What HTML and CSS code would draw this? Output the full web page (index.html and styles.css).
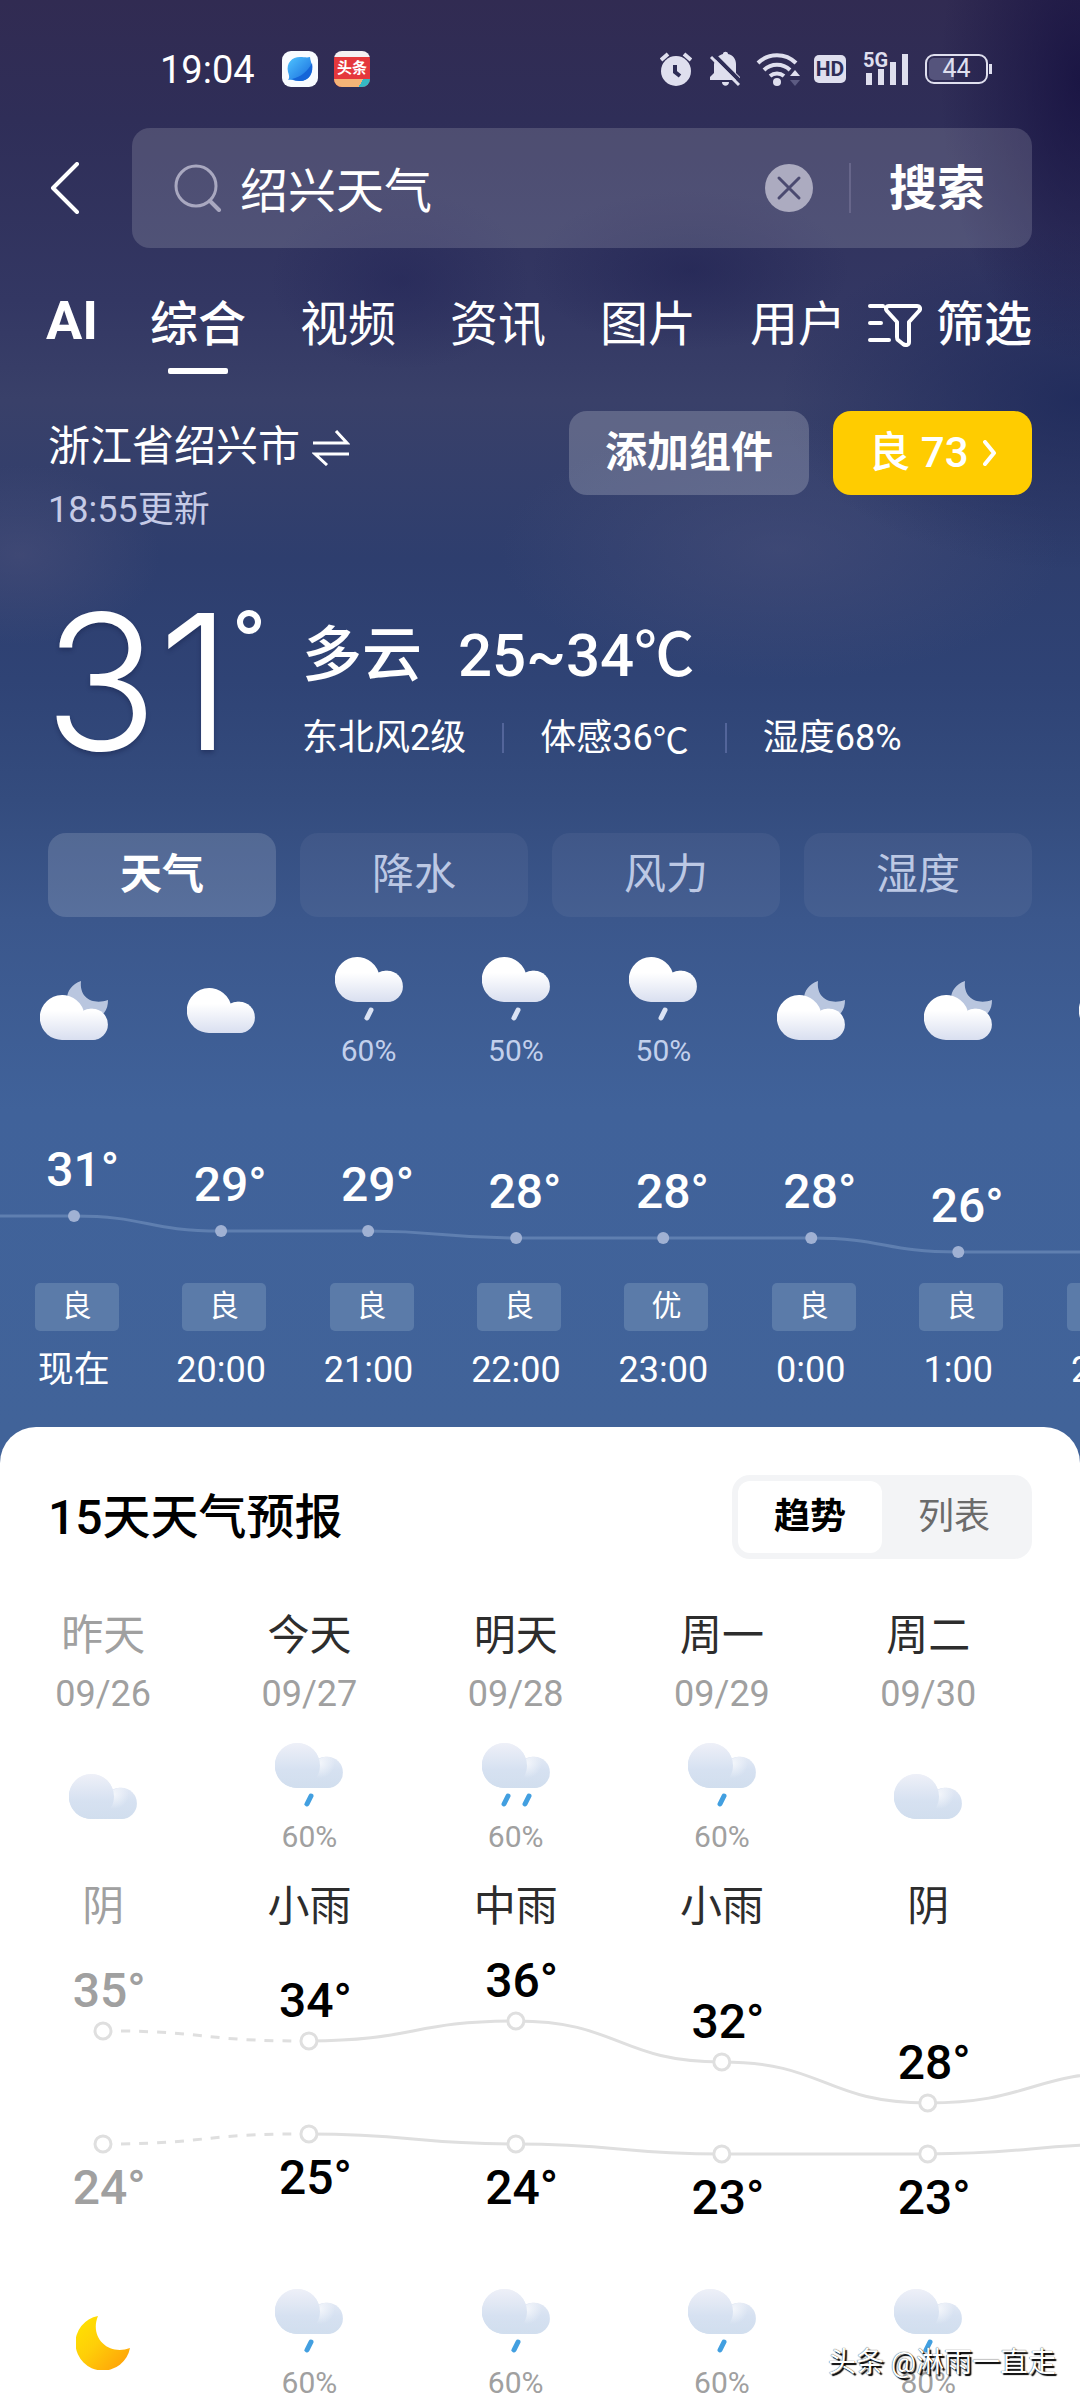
FILE: index.html
```html
<!DOCTYPE html>
<html lang="zh-CN">
<head>
<meta charset="utf-8">
<meta name="viewport" content="width=device-width, initial-scale=1">
<title>绍兴天气</title>
<link rel="stylesheet" href="styles.css">
</head>
<body>
<svg class="sprite" aria-hidden="true">
  <defs>
    <linearGradient id="g-white" gradientUnits="userSpaceOnUse" x1="0" y1="0" x2="0" y2="45"><stop offset=".35" stop-color="#fff"/><stop offset="1" stop-color="#d9dff0"/></linearGradient>
    <linearGradient id="g-pale" gradientUnits="userSpaceOnUse" x1="0" y1="0" x2="0" y2="45"><stop offset="0" stop-color="#eef0f8"/><stop offset=".6" stop-color="#d6e1f1"/><stop offset="1" stop-color="#d1deee"/></linearGradient>
    <radialGradient id="g-lobe" gradientUnits="userSpaceOnUse" cx="45" cy="20" r="15"><stop offset="0" stop-color="#f3f6fb"/><stop offset="1" stop-color="#f3f6fb" stop-opacity="0"/></radialGradient>
    <linearGradient id="g-moon" x1="0" y1="0" x2="1" y2="1"><stop offset="0" stop-color="#ffe600"/><stop offset=".45" stop-color="#ffce08"/><stop offset="1" stop-color="#ff9a0a"/></linearGradient>
    <linearGradient id="g-app" x1="0" y1="0" x2="1" y2="1"><stop offset="0" stop-color="#4fc4ff"/><stop offset="1" stop-color="#1768dc"/></linearGradient>
    <path id="cloud-shape" d="M22.500 45A22.500 22.500 0 1 1 43.600 15.400A15.700 15.700 0 1 1 52.300 45z"/>
  </defs>
  <symbol id="cloud" viewBox="0 0 68 45"><use href="#cloud-shape" fill="url(#g-white)"/><circle cx="52.300" cy="29.400" r="15.600" fill="url(#g-white)"/></symbol>
  <symbol id="cloud-moon" viewBox="0 0 68 59">
    <path d="M41 0C32 3 27 10 27 18l20 14 17 0c3-4 4-8 4-13C54 24 39 18 41 0z" fill="#b9c6df"/>
    <use href="#cloud" y="14" width="68" height="45"/>
  </symbol>
  <symbol id="cloud-rain" viewBox="0 0 68 64"><use href="#cloud" width="68" height="45"/><path d="M36 53l-4 8" stroke="#dbe3f4" stroke-width="5" stroke-linecap="round"/></symbol>
  <symbol id="pale-cloud" viewBox="0 0 68 45"><use href="#cloud-shape" fill="url(#g-pale)"/><circle cx="52.300" cy="29.400" r="15.600" fill="url(#g-pale)"/><circle cx="52.300" cy="29.400" r="15.600" fill="url(#g-lobe)"/><circle cx="22.500" cy="22.500" r="22.500" fill="url(#g-pale)"/></symbol>
  <symbol id="pale-rain" viewBox="0 0 68 64"><use href="#pale-cloud" width="68" height="45"/><path d="M36 53l-4 8" stroke="#429fe0" stroke-width="5" stroke-linecap="round"/></symbol>
  <symbol id="pale-rain-2" viewBox="0 0 68 64"><use href="#pale-cloud" width="68" height="45"/><path d="M26 53l-4 8M47 53l-4 8" stroke="#429fe0" stroke-width="5" stroke-linecap="round"/></symbol>
  <symbol id="moon" viewBox="0 0 54 54"><path d="M22 0A27.500 27.500 0 1 0 54 32C33 40 13 22 22 0z" fill="url(#g-moon)"/></symbol>
</svg>

<div class="page">
  <header class="status">
    <span class="clock">19:04</span>
    <svg class="app" viewBox="0 0 36 36" aria-hidden="true"><rect width="36" height="36" rx="9" fill="#f8fbff"/><path d="M6 29c2-2 1-5 0-8C4 12 10 6 18 6c4 0 7 1 10 0 0 3 2 6 2 11 0 8-5 13-12 13-4 0-8-2-12-1z" fill="url(#g-app)"/><path d="M10 28c9-2 16-8 20-16 2 10-3 18-12 18-4 0-6-1-8-2z" fill="#1565d8"/></svg>
    <span class="app news"><b>头条</b><i></i></span>
    <div class="system">
      <svg width="32" height="36" viewBox="0 0 32 36" aria-hidden="true"><circle cx="16" cy="20" r="15" fill="#dfdfee"/><path d="M1 9l7-6M31 9l-7-6" stroke="#dfdfee" stroke-width="4"/><path d="M15 14v7l5 4" fill="none" stroke="#2e2d56" stroke-width="4"/></svg>
      <svg class="bell" width="32" height="36" viewBox="0 0 32 36" aria-hidden="true"><path d="M1 29v-3l4-4v-9C6 7 10 4 14 3c0-3 5-3 5 0 5 1 8 5 8 10v9l4 4v3zM13 31h7c0 5-7 5-7 0z" fill="#dfdfee"/><path d="M5 4l27 27" stroke="#2e2d56" stroke-width="4"/><path d="M2 6l28 28" stroke="#dfdfee" stroke-width="3"/></svg>
      <svg class="wifi" width="46" height="36" viewBox="0 0 46 36" aria-hidden="true"><path d="M2 12a27 27 0 0 1 38 0M8 19a19 19 0 0 1 26 0M14 25a11 11 0 0 1 14 0" fill="none" stroke="#dfdfee" stroke-width="4"/><circle cx="21" cy="31" r="4" fill="#dfdfee"/><path d="M34 25l5-6 5 6z" fill="#dfdfee"/><path d="M34 29l5 6 5-6z" fill="#5c5b82"/></svg>
      <span class="hd">HD</span>
      <span class="signal"><small>5G</small><svg width="44" height="32" viewBox="0 0 44 32" aria-hidden="true"><path d="M0 20h6v12H0zM12 16h6v16h-6zM24 9h6v23h-6zM36 1h6v31h-6z" fill="#dfdfee"/></svg></span>
      <span class="battery">44</span>
    </div>
  </header>

  <form class="search-row" onsubmit="return false">
    <button class="icon-btn" type="button" aria-label="返回"><svg width="30" height="52" viewBox="0 0 30 52"><path d="M27 2L3 26l24 24" fill="none" stroke="#fff" stroke-width="4" stroke-linecap="round" stroke-linejoin="round"/></svg></button>
    <div class="search-box">
      <svg width="48" height="48" viewBox="0 0 48 48" aria-hidden="true"><circle cx="22" cy="22" r="20" fill="none" stroke="#a9a8c0" stroke-width="3"/><path d="M36 37l9 9" stroke="#a9a8c0" stroke-width="4" stroke-linecap="round"/></svg>
      <input type="text" value="绍兴天气" aria-label="搜索内容">
      <button class="icon-btn" type="button" aria-label="清除"><svg width="48" height="48" viewBox="0 0 48 48"><circle cx="24" cy="24" r="24" fill="#acabc0"/><path d="M14 14l20 20M34 14L14 34" stroke="#4b4a70" stroke-width="3" stroke-linecap="round"/></svg></button>
      <button class="submit" type="submit">搜索</button>
    </div>
  </form>

  <nav class="tabs">
    <a class="ai" href="#">AI</a>
    <a class="current" href="#">综合</a>
    <a href="#">视频</a>
    <a href="#">资讯</a>
    <a href="#">图片</a>
    <a href="#">用户</a>
    <button class="filter" type="button"><svg width="54" height="44" viewBox="0 0 54 44" aria-hidden="true"><path d="M2 3h13M2 20h11M2 37h19M21 3h28c3 0 4 3 2 5L41 19v20c0 3-3 4-6 2l-5-4c-1-1-1-2-1-3V19L19 8c-2-2-1-5 2-5z" fill="none" stroke="#fff" stroke-width="4" stroke-linecap="round" stroke-linejoin="round"/></svg>筛选</button>
  </nav>

  <section class="place">
    <div class="place-name">
      <button class="city" type="button">浙江省绍兴市<svg width="38" height="38" viewBox="0 0 38 38" aria-hidden="true"><path d="M1 15h34L24 3M37 26H3l12 11" fill="none" stroke="#fff" stroke-width="3"/></svg></button>
      <span class="updated">18:55更新</span>
    </div>
    <button class="chip" type="button">添加组件</button>
    <button class="chip air" type="button">良 73<svg width="14" height="26" viewBox="0 0 14 26" aria-hidden="true"><path d="M2 2l9 11-9 11" fill="none" stroke="#fff" stroke-width="4" stroke-linecap="round" stroke-linejoin="round"/></svg></button>
  </section>

  <section class="now">
    <div class="degrees">31</div>
    <svg class="ring" width="26" height="26" viewBox="0 0 26 26" aria-label="度"><circle cx="13" cy="13" r="9" fill="none" stroke="#fff" stroke-width="6"/></svg>
    <div class="summary">
      <div class="sky"><span>多云</span><span>25~34<span class="unit">℃</span></span></div>
      <ul class="facts"><li>东北风2级</li><li>体感36<span class="unit">℃</span></li><li>湿度68%</li></ul>
    </div>
  </section>

  <div class="metrics">
    <button class="on" type="button">天气</button>
    <button type="button">降水</button>
    <button type="button">风力</button>
    <button type="button">湿度</button>
  </div>

  <section class="hourly">
    <svg class="curve" viewBox="0 0 1179 219" aria-hidden="true">
      <path d="M0 152H74C147 152 147 167 221 167H368C442 167 442 174 516 174H811C884 174 884 188 958 188H1179" fill="none" stroke="#5f7fb0" stroke-width="3"/>
      <g fill="#a0b1d3"><circle cx="74" cy="152" r="6"/><circle cx="221" cy="167" r="6"/><circle cx="368" cy="167" r="6"/><circle cx="516" cy="174" r="6"/><circle cx="663" cy="174" r="6"/><circle cx="811" cy="174" r="6"/><circle cx="958" cy="188" r="6"/><circle cx="1105" cy="188" r="6"/></g>
    </svg>
    <ol class="hours">
      <li><div class="sign"><svg width="68" height="59"><use href="#cloud-moon"/></svg></div><div class="plot"><b style="--y:152">31°</b></div><span class="aqi">良</span><time>现在</time></li>
      <li><div class="sign"><svg width="68" height="45"><use href="#cloud"/></svg></div><div class="plot"><b style="--y:167">29°</b></div><span class="aqi">良</span><time>20:00</time></li>
      <li><div class="sign"><svg width="68" height="64"><use href="#cloud-rain"/></svg><small>60%</small></div><div class="plot"><b style="--y:167">29°</b></div><span class="aqi">良</span><time>21:00</time></li>
      <li><div class="sign"><svg width="68" height="64"><use href="#cloud-rain"/></svg><small>50%</small></div><div class="plot"><b style="--y:174">28°</b></div><span class="aqi">良</span><time>22:00</time></li>
      <li><div class="sign"><svg width="68" height="64"><use href="#cloud-rain"/></svg><small>50%</small></div><div class="plot"><b style="--y:174">28°</b></div><span class="aqi">优</span><time>23:00</time></li>
      <li><div class="sign"><svg width="68" height="59"><use href="#cloud-moon"/></svg></div><div class="plot"><b style="--y:174">28°</b></div><span class="aqi">良</span><time>0:00</time></li>
      <li><div class="sign"><svg width="68" height="59"><use href="#cloud-moon"/></svg></div><div class="plot"><b style="--y:188">26°</b></div><span class="aqi">良</span><time>1:00</time></li>
      <li><div class="sign"><svg width="54" height="45" viewBox="0 0 54 45"><use href="#cloud" width="68" height="45"/></svg></div><div class="plot"></div><span class="aqi"></span><time>2:00</time></li>
    </ol>
  </section>

  <main class="card">
    <div class="card-head">
      <h2>15天天气预报</h2>
      <div class="switch"><button class="on" type="button">趋势</button><button type="button">列表</button></div>
    </div>
    <section class="daily">
      <svg class="curve" viewBox="0 0 1238 355" aria-hidden="true">
        <g fill="none" stroke="#dfdfdf" stroke-width="3">
          <path d="M121 97C206 98 206 107 300 107M121 210C206 209 206 200 300 200" stroke-dasharray="9 9"/>
          <path d="M309 107C413 107 413 87 516 87S619 128 722 128S825 169 928 169S1031 138 1135 138"/>
          <path d="M309 200C413 200 413 210 516 210S619 220 722 220H928C1031 220 1031 210 1135 210"/>
          <g fill="#fff"><circle cx="103" cy="97" r="8"/><circle cx="309" cy="107" r="8"/><circle cx="516" cy="87" r="8"/><circle cx="722" cy="128" r="8"/><circle cx="928" cy="169" r="8"/><circle cx="103" cy="210" r="8"/><circle cx="309" cy="200" r="8"/><circle cx="516" cy="210" r="8"/><circle cx="722" cy="220" r="8"/><circle cx="928" cy="220" r="8"/></g>
        </g>
      </svg>
      <ol class="days">
        <li class="past"><span class="day">昨天</span><time>09/26</time><div class="sign"><svg width="68" height="45"><use href="#pale-cloud"/></svg></div><span class="day label">阴</span><div class="plot" style="--hi:97;--lo:210"><b>35°</b><b>24°</b></div><div class="sign"><svg width="54" height="54"><use href="#moon"/></svg></div></li>
        <li><span class="day">今天</span><time>09/27</time><div class="sign"><svg width="68" height="64"><use href="#pale-rain"/></svg><small>60%</small></div><span class="day label">小雨</span><div class="plot" style="--hi:107;--lo:200"><b>34°</b><b>25°</b></div><div class="sign"><svg width="68" height="64"><use href="#pale-rain"/></svg><small>60%</small></div></li>
        <li><span class="day">明天</span><time>09/28</time><div class="sign"><svg width="68" height="64"><use href="#pale-rain-2"/></svg><small>60%</small></div><span class="day label">中雨</span><div class="plot" style="--hi:87;--lo:210"><b>36°</b><b>24°</b></div><div class="sign"><svg width="68" height="64"><use href="#pale-rain"/></svg><small>60%</small></div></li>
        <li><span class="day">周一</span><time>09/29</time><div class="sign"><svg width="68" height="64"><use href="#pale-rain"/></svg><small>60%</small></div><span class="day label">小雨</span><div class="plot" style="--hi:128;--lo:220"><b>32°</b><b>23°</b></div><div class="sign"><svg width="68" height="64"><use href="#pale-rain"/></svg><small>60%</small></div></li>
        <li><span class="day">周二</span><time>09/30</time><div class="sign"><svg width="68" height="45"><use href="#pale-cloud"/></svg></div><span class="day label">阴</span><div class="plot" style="--hi:169;--lo:220"><b>28°</b><b>23°</b></div><div class="sign"><svg width="68" height="64"><use href="#pale-rain"/></svg><small>80%</small></div></li>
      </ol>
    </section>
  </main>
  <div class="credit">头条 @淋雨一直走</div>
</div>
</body>
</html>
```

FILE: styles.css
```css
* { box-sizing: border-box; }

body {
  margin: 0;
  font-family: Roboto, "Noto Sans CJK SC", sans-serif;
  font-size: 36px;
  line-height: 44px;
  color: #fff;
  background: #fff;
}

button, input {
  margin: 0;
  padding: 0;
  border: 0;
  background: none;
  font: inherit;
  color: inherit;
}

button { cursor: pointer; }
a { color: inherit; text-decoration: none; }
ol, ul { margin: 0; padding: 0; list-style: none; }
svg { display: block; flex: none; }
.sprite { position: absolute; width: 0; height: 0; }

.page {
  position: relative;
  min-height: 100vh;
  display: flex;
  flex-direction: column;
  overflow: hidden;
  background:
    radial-gradient(ellipse 140px 280px at 100% 80px, rgba(20, 14, 62, .75), transparent),
    radial-gradient(ellipse 300px 170px at 100% 400px, rgba(26, 38, 88, .75), transparent),
    radial-gradient(ellipse 130px 90px at 400px 280px, rgba(34, 36, 86, .5), transparent),
    radial-gradient(ellipse 160px 80px at 690px 270px, rgba(30, 32, 80, .5), transparent),
    radial-gradient(ellipse 280px 130px at 780px 550px, rgba(76, 82, 124, .5), transparent),
    radial-gradient(ellipse 140px 90px at 20px 555px, rgba(82, 84, 124, .45), transparent),
    linear-gradient(#312b52 0, #2f2e58 120px, #333763 300px, #394069 400px, #2e3e6e 560px, #2f4375 680px, #344c7e 800px, #3b578c 920px, #40629a 1110px, #416399 1427px);
}

.status { display: flex; align-items: center; height: 36px; margin: 51px 92px 0 160px; }
.clock { width: 122px; padding-top: 2px; font-size: 38px; }
.app { width: 36px; height: 36px; }
.news {
  display: flex;
  flex-direction: column;
  justify-content: flex-end;
  margin-left: 16px;
  overflow: hidden;
  border-radius: 8px;
  background: linear-gradient(#f4f0f2 6px, #e5383c 6px);
}
.news b { font-size: 15px; line-height: 22px; text-align: center; }
.news i { height: 8px; background: linear-gradient(120deg, #f5b477 72%, #35b8c4 72%); }

.system { display: flex; align-items: center; margin-left: auto; color: #dfdfee; }
.bell { margin-left: 17px; }
.wifi { margin-left: 15px; }
.hd {
  width: 32px;
  margin-left: 12px;
  border-radius: 5px;
  background: #dfdfee;
  color: #2e2d56;
  font-size: 21px;
  font-weight: 700;
  line-height: 28px;
  text-align: center;
}
.signal { position: relative; margin-left: 20px; }
.signal small { position: absolute; left: -3px; top: -3px; font-size: 20px; font-weight: 700; line-height: 20px; }
.battery {
  position: relative;
  width: 63px;
  margin-left: 15px;
  border: 2px solid #dfdfee;
  border-radius: 9px;
  background: linear-gradient(90deg, #55547c 45%, transparent 45%) content-box;
  padding: 2px;
  font-size: 25px;
  line-height: 22px;
  text-align: center;
}
.battery::after { content: ""; position: absolute; right: -6px; top: 8px; width: 3px; height: 10px; background: #dfdfee; }

.search-row { display: flex; align-items: center; gap: 52px; margin: 41px 48px 0 50px; }
.search-box {
  flex: 1;
  min-width: 0;
  display: flex;
  align-items: center;
  height: 120px;
  padding: 0 47px 0 42px;
  border-radius: 18px;
  background: rgba(255, 255, 255, .15);
  font-size: 48px;
}
.search-box input { flex: 1; min-width: 0; height: 72px; padding: 0 0 2px 18px; outline: 0; }
.submit { margin-left: 36px; padding: 2px 0 0 38px; border-left: 2px solid #67668a; font-weight: 700; line-height: 48px; }

.tabs { display: flex; gap: 54px; margin: 45px 48px 0; font-size: 48px; line-height: 64px; white-space: nowrap; }
.tabs a { flex: none; display: flex; flex-direction: column; align-items: center; height: 81px; }
.tabs .ai { width: 48px; font-size: 54px; font-weight: 700; line-height: 56px; }
.current { font-weight: 500; }
.current::after { content: ""; width: 60px; height: 6px; margin-top: 11px; border-radius: 2px; background: #fff; }
.filter { display: flex; align-items: center; gap: 14px; height: 64px; font-weight: 500; }
.tabs .filter { margin-left: -32px; }

.place { display: flex; align-items: flex-start; gap: 24px; margin: 37px 48px 0; }
.place-name { flex: 1; display: flex; flex-direction: column; align-items: flex-start; gap: 17px; padding-top: 12px; }
.city { display: flex; align-items: center; gap: 12px; font-size: 42px; line-height: 48px; }
.updated { color: #c5cae6; }
.chip {
  width: 240px;
  height: 84px;
  border-radius: 18px;
  background: rgba(255, 255, 255, .2);
  font-size: 42px;
  font-weight: 700;
}
.air { display: flex; align-items: center; justify-content: center; gap: 14px; width: 199px; background: #fc0; font-weight: 500; }

.now { display: flex; align-items: flex-start; margin: 54px 48px 0 44px; }
.degrees { width: 192px; font-family: Inter, sans-serif; font-size: 188px; font-weight: 300; line-height: 192px; text-shadow: 0 3px 4px rgba(20, 30, 70, .4); }
.ring { margin-top: 23px; }
.summary { margin: 34px 0 0 40px; }
.sky { display: flex; gap: 36px; font-size: 60px; font-weight: 500; line-height: 72px; }
.unit { font-family: "Noto Sans CJK SC", sans-serif; line-height: 1; }
.facts { display: flex; align-items: center; margin-top: 24px; }
.facts li { display: flex; align-items: center; }
.facts li + li::before { content: ""; width: 2px; height: 30px; margin: 0 36px; background: #53659a; }

.metrics { display: grid; grid-template-columns: repeat(4, 1fr); gap: 24px; margin: 55px 48px 0; }
.metrics button { height: 84px; border-radius: 18px; background: rgba(255, 255, 255, .05); color: #bcc8e4; font-size: 42px; }
.metrics .on { background: rgba(255, 255, 255, .15); color: #fff; font-weight: 700; }

/* Hourly strip: eight columns, wider than the window */
.hourly { position: relative; width: 109.2%; margin-top: 40px; padding-bottom: 35px; }
.hourly .curve { position: absolute; left: 0; top: 107px; width: 100%; }
.hours { position: relative; display: grid; grid-template-columns: repeat(8, 1fr); }
.hours li, .days li { display: flex; flex-direction: column; align-items: center; }
.sign { display: flex; flex-direction: column; align-items: center; justify-content: center; height: 107px; }
.sign small { margin-top: 17px; font-size: 30px; line-height: 26px; color: #c3d0ec; }
.plot b { display: block; padding-left: 18px; font-size: 48px; font-weight: 500; line-height: 48px; }
.hours .plot { height: 219px; }
.hours .plot b { margin-top: calc(var(--y) * 1px - 70px); }
.aqi { width: 84px; height: 48px; margin-left: 6px; border-radius: 5px; background: #5b7ba9; font-size: 30px; line-height: 46px; text-align: center; }
.hours time { margin-top: 17px; }

.card { flex: 1; padding-top: 48px; border-radius: 36px 36px 0 0; background: #fff; color: #000; }
.card-head { display: flex; align-items: center; justify-content: space-between; margin: 0 48px; }
h2 { margin: 0; padding-top: 2px; font-size: 48px; font-weight: 500; line-height: 60px; }
.switch { display: flex; padding: 6px; border-radius: 18px; background: #f3f4f6; }
.switch button { width: 144px; height: 72px; border-radius: 12px; color: #6b6b6b; }
.switch .on { background: #fff; color: #000; font-weight: 700; }

/* Daily strip: six columns, the last one past the edge */
.daily { position: relative; width: 114.6%; margin-top: 50px; padding-bottom: 5px; }
.daily .curve { position: absolute; left: 0; top: 325px; width: 100%; }
.days { position: relative; display: grid; grid-template-columns: repeat(6, 1fr); }
.day { font-size: 42px; line-height: 54px; color: #2d2d2d; }
.label { margin-top: 30px; }
.days time { margin: 11px 0 29px; line-height: 40px; color: #a0a0a0; }
.days small { color: #a0a0a0; }
.days .plot { height: 355px; }
.days .plot b { margin-top: calc(var(--hi) * 1px - 64px); padding-left: 12px; }
.days .plot b + b { margin-top: calc((var(--lo) - var(--hi)) * 1px + 36px); }
.past .day, .past .plot { color: #a0a0a0; }

.credit {
  position: absolute;
  right: 24px;
  bottom: 20px;
  font-size: 28px;
  line-height: 36px;
  text-shadow: 2px 2px 1px #000, 0 0 1px #000;
}
```
